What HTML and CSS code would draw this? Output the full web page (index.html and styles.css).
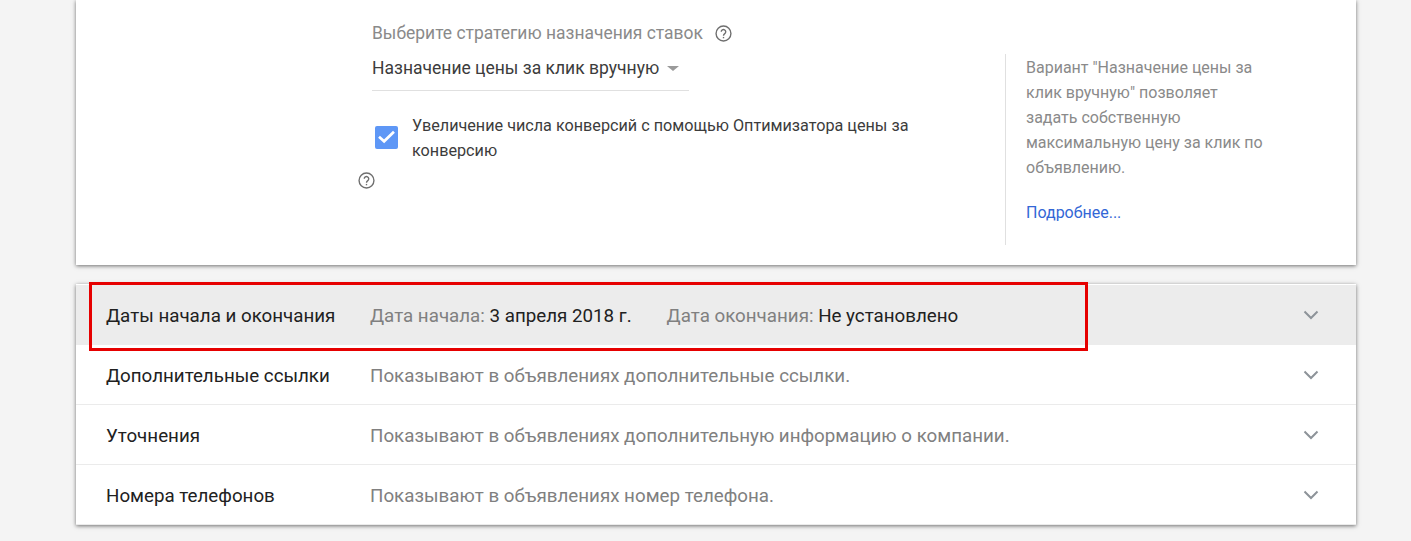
FILE: index.html
```html
<!DOCTYPE html>
<html lang="en">
<head>
    <meta charset="UTF-8">
    <title>Настройки кампании</title>
    <link rel="stylesheet" href="styles.css">
</head>
<body>
    <div class="page">
        <div class="card bidding">
            <div class="bid-main">
                <div class="bid-label">
                    <span>Выберите стратегию назначения ставок</span>
                    <svg class="help" viewBox="0 0 16 16"><circle cx="8" cy="8" r="7" /><path d="M5.9 6.4a2.1 2.1 0 1 1 3.3 1.7c-.8.6-1.2 1-1.2 1.9" /><path class="dot" d="M8 11.2v1.3" /></svg>
                </div>
                <div class="bid-select">
                    <span>Назначение цены за клик вручную</span>
                    <span class="caret"></span>
                </div>
                <div class="bid-check">
                    <span class="checkbox">
                        <svg viewBox="0 0 24 24"><path d="M4.2 11.3L9.5 16 19.8 6" /></svg>
                    </span>
                    <span class="check-text">Увеличение числа конверсий с помощью Оптимизатора цены за конверсию</span>
                </div>
                <svg class="help help-low" viewBox="0 0 16 16"><circle cx="8" cy="8" r="7" /><path d="M5.9 6.4a2.1 2.1 0 1 1 3.3 1.7c-.8.6-1.2 1-1.2 1.9" /><path class="dot" d="M8 11.2v1.3" /></svg>
            </div>
            <div class="bid-aside">
                <p>Вариант "Назначение цены за клик вручную" позволяет задать собственную максимальную цену за клик по объявлению.</p>
                <a href="#">Подробнее...</a>
            </div>
        </div>

        <div class="card rows">
            <div class="row active">
                <div class="row-title">Даты начала и окончания</div>
                <div class="row-info">
                    <span class="date"><span class="muted">Дата начала:</span> 3 апреля 2018 г.</span>
                    <span class="date"><span class="muted">Дата окончания:</span> Не установлено</span>
                </div>
                <svg class="chevron" viewBox="0 0 16 10"><path d="M1.5 1.5L8 8l6.5-6.5" /></svg>
            </div>
            <div class="row">
                <div class="row-title">Дополнительные ссылки</div>
                <div class="row-info muted">Показывают в объявлениях дополнительные ссылки.</div>
                <svg class="chevron" viewBox="0 0 16 10"><path d="M1.5 1.5L8 8l6.5-6.5" /></svg>
            </div>
            <div class="row">
                <div class="row-title">Уточнения</div>
                <div class="row-info muted">Показывают в объявлениях дополнительную информацию о компании.</div>
                <svg class="chevron" viewBox="0 0 16 10"><path d="M1.5 1.5L8 8l6.5-6.5" /></svg>
            </div>
            <div class="row">
                <div class="row-title">Номера телефонов</div>
                <div class="row-info muted">Показывают в объявлениях номер телефона.</div>
                <svg class="chevron" viewBox="0 0 16 10"><path d="M1.5 1.5L8 8l6.5-6.5" /></svg>
            </div>
            <div class="highlight"></div>
        </div>
    </div>
</body>
</html>
```

FILE: styles.css
```css
html, body {
    margin: 0;
    padding: 0;
}
body {
    font-family: Roboto, "Liberation Sans", sans-serif;
    background-color: #f4f4f4;
    color: #212121;
    height: 541px;
    overflow: hidden;
}
.page {
    width: 1280px;
    margin-left: 76px;
}
.card {
    background-color: #ffffff;
    box-shadow: 0 1px 4px rgba(0, 0, 0, 0.55);
}
.bidding {
    display: flex;
    height: 265px;
    box-sizing: border-box;
    margin-bottom: 19px;
}
.bid-main {
    position: relative;
    width: 929px;
    box-sizing: border-box;
    padding: 22px 0 0 296px;
}
.bid-label {
    display: flex;
    align-items: center;
    height: 22px;
    font-size: 17.45px;
    color: #8a8a8a;
}
.help {
    width: 17px;
    height: 17px;
    margin-left: 12px;
    fill: none;
    stroke: #6f6f6f;
    stroke-width: 1.3;
}
.help-low {
    position: absolute;
    left: 270px;
    top: 172px;
}
.bid-select {
    display: flex;
    align-items: center;
    width: 317px;
    height: 45px;
    margin-top: 2px;
    border-bottom: 1px solid #e0e0e0;
    box-sizing: border-box;
    font-size: 17.5px;
    color: #3c3c3c;
}
.caret {
    width: 0;
    height: 0;
    margin-left: 8px;
    border-left: 6px solid transparent;
    border-right: 6px solid transparent;
    border-top: 5px solid #9a9a9a;
}
.bid-check {
    display: flex;
    align-items: center;
    margin-top: 22px;
    padding-left: 3px;
    width: 560px;
}
.checkbox {
    flex: none;
    width: 23px;
    height: 23px;
    margin-bottom: 1px;
    background-color: #5e97f6;
    border-radius: 2px;
}
.checkbox svg {
    display: block;
    width: 23px;
    height: 23px;
    fill: none;
    stroke: #ffffff;
    stroke-width: 2.8;
}
.check-text {
    margin-left: 14px;
    font-size: 16.2px;
    line-height: 25px;
    color: #3c3c3c;
}
.bid-aside {
    width: 351px;
    box-sizing: border-box;
    height: 191px;
    margin-top: 54px;
    padding: 1px 85px 0 20px;
    border-left: 1px solid #e0e0e0;
    font-size: 16px;
    line-height: 25px;
    color: #8a8a8a;
}
.bid-aside p {
    margin: 0 0 20px 0;
}
.bid-aside a {
    color: #3367d6;
    text-decoration: none;
}
.rows {
    position: relative;
    height: 241px;
    box-sizing: border-box;
    padding-top: 1px;
}
.row {
    display: flex;
    align-items: center;
    height: 60px;
    box-sizing: border-box;
    padding: 1px 0 0 30px;
    box-shadow: inset 0 -1px 0 #ebebeb;
    font-size: 18.75px;
}
.row:last-of-type {
    box-shadow: none;
}
.row.active {
    background-color: #ececec;
    box-shadow: none;
}
.row-title {
    width: 264px;
    color: #212121;
}
.row-info {
    flex: 1;
    display: flex;
}
.muted {
    color: #808080;
}
.date {
    margin-right: 35px;
}
.chevron {
    width: 16px;
    height: 10px;
    margin: 0 37px 1px 0;
    fill: none;
    stroke: #8d9399;
    stroke-width: 2;
}
.highlight {
    position: absolute;
    left: 13px;
    top: -2px;
    width: 999px;
    height: 69px;
    box-sizing: border-box;
    border: 3px solid #e60000;
}
```
